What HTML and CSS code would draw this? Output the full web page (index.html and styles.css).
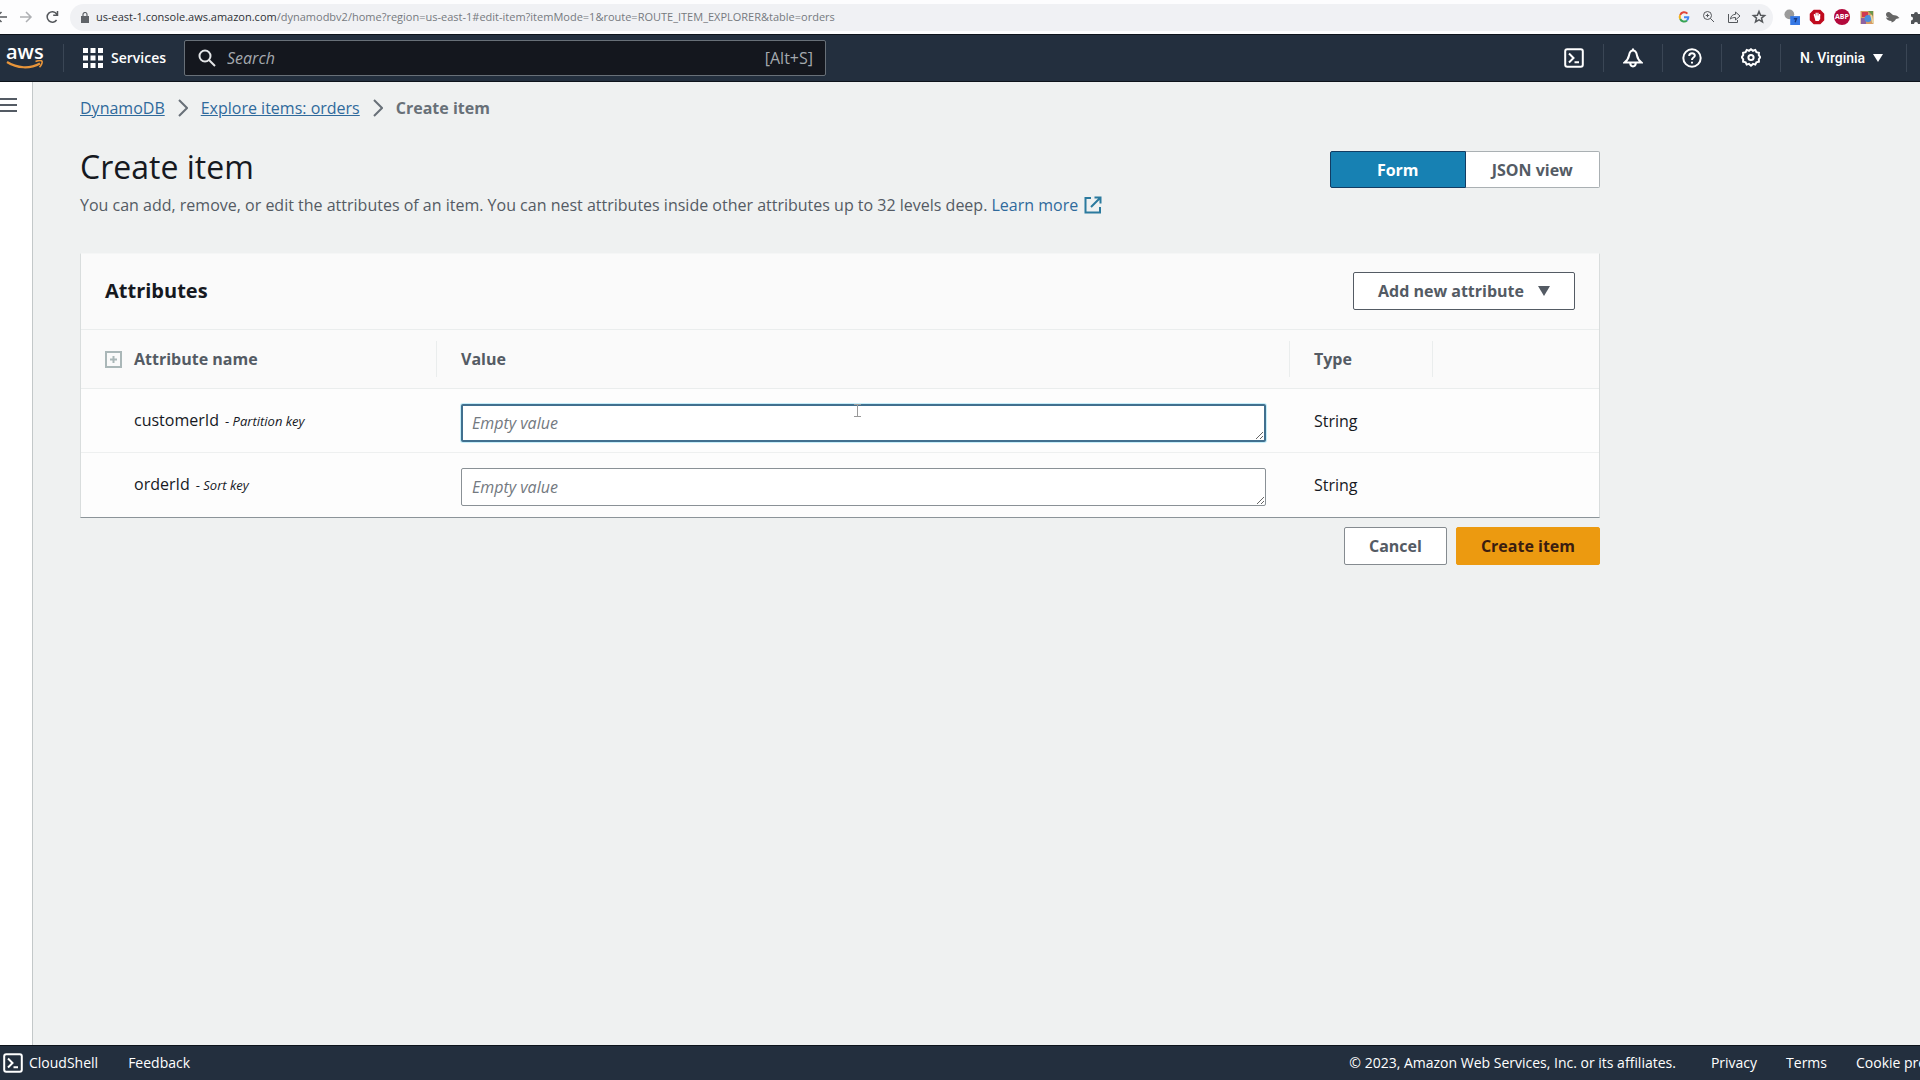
FILE: index.html
```html
<!DOCTYPE html>
<html lang="en">
<head>
<meta charset="utf-8">
<meta name="viewport" content="width=device-width, initial-scale=1">
<title>Create item</title>
<link rel="stylesheet" href="styles.css">
</head>
<body>
<div class="browser">
  <div class="browser-nav">
    <button class="tool back" aria-label="Back"><svg viewBox="0 0 16 16"><path d="M15 8H4M9.500 3l-5 5 5 5"/></svg></button>
    <button class="tool forward" aria-label="Forward"><svg viewBox="0 0 16 16"><path d="M2 8h11M8 3l5 5-5 5"/></svg></button>
    <button class="tool" aria-label="Reload"><svg viewBox="0 0 16 16"><path d="M12.600 11A5.200 5.200 0 1 1 12.500 4.800L13.500 6M13.500 2v4.300H9.200"/></svg></button>
  </div>
  <div class="address">
    <svg class="lock" viewBox="0 0 8 11"><path d="M0 4h8v7H0z" fill="#5f6368"/><path d="M2 4V2.500a2 2 0 0 1 4 0V4" fill="none" stroke="#5f6368" stroke-width="1.200"/></svg>
    <span class="url"><span class="host">us-east-1.console.aws.amazon.com</span>/dynamodbv2/home?region=us-east-1#edit-item?itemMode=1&amp;route=ROUTE_ITEM_EXPLORER&amp;table=orders</span>
    <div class="address-tools">
      <button class="tool" aria-label="Google"><svg viewBox="0 0 16 16" class="google"><path d="M11.400 4.600A4.300 4.300 0 0 0 4.200 6" stroke="#e0453a"/><path d="M4.200 6a4.300 4.300 0 0 0 0 4" stroke="#f2b21c"/><path d="M4.200 10a4.300 4.300 0 0 0 6.800 1.400" stroke="#37a455"/><path d="M11 11.400A4.300 4.300 0 0 0 12.300 8.200H8" stroke="#4285f4"/></svg></button>
      <button class="tool" aria-label="Zoom"><svg viewBox="0 0 16 16" class="thin"><circle cx="6.500" cy="6.500" r="4"/><path d="M9.500 9.500L13 13M4.800 6.500h3.400M6.500 4.800v3.400"/></svg></button>
      <button class="tool" aria-label="Share"><svg viewBox="0 0 16 16" class="thin"><path d="M2.500 5v8.500h9V11M4.500 10c.4-3.200 2.400-4.600 5-4.700V3l4.500 4-4.500 4V8.500c-2.200 0-3.800.4-5 1.500z"/></svg></button>
      <button class="tool" aria-label="Bookmark"><svg viewBox="0 0 16 16"><path d="M8 2.500l1.600 3.700 4 .3-3.100 2.600 1 3.900L8 10.900 4.500 13l1-3.900L2.400 6.500l4-.3z"/></svg></button>
    </div>
  </div>
  <div class="extensions">
    <button class="tool" aria-label="Extension, 7 items"><svg viewBox="0 0 18 18" class="solid"><circle cx="6" cy="6" r="5.500" fill="#9b9b9b"/><rect x="7" y="8" width="11" height="10" fill="#3578e5"/><path d="M11 11h3l-1.500 4" fill="none" stroke="#173a80"/></svg></button>
    <button class="tool" aria-label="Content blocker"><svg viewBox="0 0 16 16" class="solid"><path d="M5 1.500h6L14.500 5v6L11 14.500H5L1.500 11V5z" fill="#c00b1e" stroke="#c00b1e"/><path d="M5.500 7V5M7.200 7V3.800M8.900 7V3.800M10.600 7V5" stroke="#fff" stroke-width="1.300"/><path d="M4.900 6.500h6.300V10l-1.500 2H6.500z" fill="#fff"/></svg></button>
    <button class="tool abp">ABP</button>
    <button class="tool" aria-label="Colour tool"><svg viewBox="0 0 16 16" class="solid"><path d="M1.500 2h13v13h-13z" fill="#d99d63"/><path d="M3 3h6v5H3z" fill="#d13b52"/><path d="M9 2h5v5z" fill="#6a974b"/><path d="M2 9h5v6H2z" fill="#8d62a0"/><circle cx="9" cy="9.500" r="3.500" fill="#4b8ddd"/><path d="M12 6l2 8" stroke="#e1d9a4"/></svg></button>
    <button class="tool" aria-label="Bird"><svg viewBox="0 0 16 16" class="solid"><path d="M2 5.500C2 3.500 4 2.500 6 3.500L9 6l3 .5c2 .3 2 1.500 3.500 2.500L12 10c-1 2-2.500 3-4.500 3.500V12C4.500 12 2.500 10.500 2 8.500l3 .5C3 8 2 7 2 5.500z" fill="#666"/></svg></button>
    <button class="tool" aria-label="Extensions"><svg viewBox="0 0 16 16" class="solid"><path d="M2 5h3a2 2 0 1 1 4 0h4v4a2 2 0 1 1 0 4v2H9a2 2 0 0 0-4 0H2v-3.500a2 2 0 0 0 0-4z" fill="#505357"/></svg></button>
  </div>
</div>

<header class="topnav">
  <a class="logo" href="#" aria-label="AWS home">
    <span>aws</span>
    <svg viewBox="0 0 38 10"><path d="M1 2c10 6.500 23 7 33 1.500" fill="none" stroke="#e8953a" stroke-width="2.200"/><path d="M29.500 1.500c3-1 6-1 6.500-.2s-.5 4-2.500 6" fill="none" stroke="#e8953a" stroke-width="1.600"/></svg>
  </a>
  <button class="services">
    <svg viewBox="0 0 20 20"><path d="M0 0h5v5H0zM7.500 0h5v5h-5zM15 0h5v5h-5zM0 7.500h5v5H0zM7.500 7.500h5v5h-5zM15 7.500h5v5h-5zM0 15h5v5H0zM7.500 15h5v5h-5zM15 15h5v5h-5z"/></svg>
    Services
  </button>
  <label class="search">
    <svg viewBox="0 0 18 18"><circle cx="7" cy="7" r="5.500"/><path d="M11 11l6 6"/></svg>
    <input type="search" placeholder="Search" aria-label="Search">
    <span>[Alt+S]</span>
  </label>
  <nav class="utilities">
    <button class="utility" aria-label="CloudShell"><svg viewBox="0 0 20 20"><rect x="1.200" y="1.200" width="17.600" height="17.600" rx="2"/><path d="M5 5.500L9.500 10 5 14.500M10.500 14.200H15"/></svg></button>
    <button class="utility" aria-label="Notifications"><svg viewBox="0 0 20 20"><path d="M1.500 14.500C4 12.500 5.500 10.500 6 7.500 6.500 4.500 7.500 2.500 10 2.500s3.500 2 4 5c.5 3 2 5 4.500 7zM10 3V.5M7.200 15c.2 4.500 5.400 4.500 5.600 0"/></svg></button>
    <button class="utility" aria-label="Help"><svg viewBox="0 0 20 20"><circle cx="10" cy="10" r="8.700"/><path d="M7.200 8c.1-3.800 5.800-3.500 5.600-.3-.1 2-2.800 1.800-2.800 4.300M10 13.800v1.800"/></svg></button>
    <button class="utility" aria-label="Settings"><svg viewBox="0 0 20 20"><path d="M10 1.200l2 1.600 2.300-.9 1.100 2.300 2.500.5-.1 2.500 1.500 2-1.500 2 .1 2.500-2.500.6-1.100 2.300-2.300-.7-2 1.800-2-1.800-2.300.7-1.100-2.300-2.500-.6.100-2.500-1.500-2 1.500-2L2.100 4.700l2.500-.5 1.100-2.300 2.300.9z"/><circle cx="10" cy="9.500" r="2.600"/></svg></button>
    <button class="region">N. Virginia <svg viewBox="0 0 10 8"><path d="M0 0h10L5 8z" fill="#fff"/></svg></button>
  </nav>
</header>

<div class="body">
  <aside class="rail"><button class="menu" aria-label="Open navigation"><svg viewBox="0 0 18 16"><path d="M0 2h17M0 8h17M0 14h17"/></svg></button></aside>
  <main class="content">
    <nav class="crumbs" aria-label="Breadcrumb">
      <a href="#">DynamoDB</a>
      <svg viewBox="0 0 10 18"><path d="M1 1l8 8-8 8"/></svg>
      <a href="#">Explore items: orders</a>
      <svg viewBox="0 0 10 18"><path d="M1 1l8 8-8 8"/></svg>
      <strong>Create item</strong>
    </nav>
    <div class="title-row">
      <div>
        <h1>Create item</h1>
        <p class="intro">You can add, remove, or edit the attributes of an item. You can nest attributes inside other attributes up to 32 levels deep. <a href="#">Learn more <svg viewBox="0 0 18 18"><path d="M7 2H1.500v14.500H16V11M10.500 1.500H16.500v6M16 2L7 11"/></svg></a></p>
      </div>
      <div class="segments" role="group" aria-label="View">
        <button class="segment selected" aria-pressed="true">Form</button>
        <button class="segment" aria-pressed="false">JSON view</button>
      </div>
    </div>

    <section class="panel">
      <div class="panel-head">
        <h2>Attributes</h2>
        <button class="btn add">Add new attribute <svg viewBox="0 0 12 10"><path d="M0 0h12L6 10z" fill="#545b64"/></svg></button>
      </div>
      <table class="attributes">
        <colgroup><col class="col-name"><col><col class="col-type"><col class="col-actions"></colgroup>
        <thead>
          <tr>
            <th><div class="name-head"><button class="expand" aria-label="Expand all"><svg viewBox="0 0 17 17"><path d="M1 1h15v15H1zM5 8.500h7M8.500 5v7"/></svg></button>Attribute name</div></th>
            <th><div>Value</div></th>
            <th><div>Type</div></th>
            <th></th>
          </tr>
        </thead>
        <tbody>
          <tr>
            <td class="name"><label for="customer">customerId</label><span class="key">- <em>Partition key</em></span></td>
            <td class="value">
              <textarea id="customer" class="focused" rows="1" placeholder="Empty value"></textarea>
              <svg class="pointer" viewBox="0 0 7 13"><path d="M0 .5h7M3.500 1v11M0 12.500h7"/></svg>
            </td>
            <td>String</td>
            <td></td>
          </tr>
          <tr>
            <td class="name"><label for="order">orderId</label><span class="key">- <em>Sort key</em></span></td>
            <td class="value"><textarea id="order" rows="1" placeholder="Empty value"></textarea></td>
            <td>String</td>
            <td></td>
          </tr>
        </tbody>
      </table>
    </section>
    <div class="actions">
      <button class="btn">Cancel</button>
      <button class="btn primary">Create item</button>
    </div>
  </main>
</div>

<footer class="footer">
  <a class="shell" href="#"><svg viewBox="0 0 20 20"><rect x="1.200" y="1.200" width="17.600" height="17.600" rx="2"/><path d="M5 5.500L9.500 10 5 14.500M10.500 14.200H15"/></svg>CloudShell</a>
  <a href="#">Feedback</a>
  <span class="legal">© 2023, Amazon Web Services, Inc. or its affiliates.</span>
  <a class="privacy" href="#">Privacy</a>
  <a class="terms" href="#">Terms</a>
  <a class="cookies" href="#">Cookie preferences</a>
</footer>
</body>
</html>
```
FILE: styles.css
```css
* { box-sizing: border-box; }

body {
  margin: 0;
  min-height: 100vh;
  display: flex;
  flex-direction: column;
  background: #eff1f1;
  color: #16191f;
  font: 16px/24px "Open Sans", "Noto Sans", sans-serif;
  overflow-x: hidden;
}

button, input, textarea { font: inherit; color: inherit; }
button { border: 0; background: none; padding: 0; cursor: pointer; }
svg { display: block; flex: none; fill: none; }

/* Browser toolbar */
.browser {
  display: flex;
  align-items: center;
  height: 34px;
  background: #fdfdfe;
  overflow: hidden;
}
.browser-nav { display: flex; gap: 10px; width: 78px; margin-left: -8px; flex: none; }
.tool { width: 16px; height: 16px; flex: none; }
.tool svg { width: 16px; height: 16px; stroke: #55585c; stroke-width: 1.5; }
.tool svg.thin { stroke-width: 1; }
.tool svg.solid { stroke: none; }
.tool svg.google { stroke-width: 2; }
.forward svg { stroke: #aeb0b3; }
.address {
  display: flex;
  align-items: center;
  flex: 1;
  min-width: 0;
  height: 27px;
  padding: 0 6px 0 11px;
  border-radius: 14px;
  background: #f0f1f4;
}
.lock { width: 8px; height: 11px; margin-right: 7px; }
.url { font-size: 11px; line-height: 16px; color: #767a7f; white-space: nowrap; overflow: hidden; }
.host { color: #2f3236; }
.address-tools { display: flex; gap: 9px; margin-left: auto; }
.extensions { display: flex; gap: 9px; width: 147px; padding-left: 11px; flex: none; }
.abp {
  border-radius: 8px;
  background: #b3093c;
  color: #fff;
  font-size: 7px;
  font-weight: 700;
  line-height: 16px;
}

/* Service navigation */
.topnav {
  display: flex;
  align-items: center;
  height: 48px;
  background: #232f3e;
  border-top: 1px solid #0d131b;
  border-bottom: 1px solid #0d131b;
  color: #fff;
}
.logo {
  width: 64px;
  height: 28px;
  padding-left: 6px;
  border-right: 1px solid #3a4655;
  color: #fff;
  font-size: 20px;
  font-weight: 600;
  line-height: 16px;
  text-decoration: none;
  flex: none;
}
.logo span { display: block; }
.logo svg { width: 38px; height: 10px; }
.services {
  display: flex;
  align-items: center;
  gap: 8px;
  width: 120px;
  padding-left: 19px;
  font-size: 14px;
  font-weight: 600;
  flex: none;
}
.services svg { width: 20px; height: 20px; fill: #fff; }
.search {
  display: flex;
  align-items: center;
  width: 642px;
  height: 36px;
  padding: 0 12px 0 13px;
  border: 1px solid #687078;
  border-radius: 2px;
  background: #14171e;
  color: #a4a9ae;
}
.search svg { width: 18px; height: 18px; stroke: #e4e6e8; stroke-width: 2; }
.search input {
  flex: 1;
  min-width: 0;
  margin: 0 0 0 11px;
  padding: 0;
  border: 0;
  outline: 0;
  background: none;
}
.search input::placeholder { color: #a4a9ae; font-style: italic; opacity: 1; }
.utilities { display: flex; align-items: center; margin-left: auto; flex: none; }
.utility {
  display: flex;
  justify-content: center;
  width: 59px;
  border-right: 1px solid #3a4655;
  padding: 4px 0;
}
.utility svg { width: 20px; height: 20px; stroke: #fff; stroke-width: 2; }
.region {
  display: flex;
  align-items: center;
  gap: 8px;
  width: 126px;
  margin-right: 13px;
  padding: 2px 0 2px 19px;
  border-right: 1px solid #3a4655;
  font: 500 14px/24px Roboto, sans-serif;
}
.region svg { width: 10px; height: 8px; }

/* Page */
.body { display: flex; flex: 1; }
.rail { width: 33px; padding-top: 15px; background: #fff; border-right: 1px solid #c3c8c9; flex: none; }
.menu { display: block; }
.menu svg { width: 18px; height: 16px; stroke: #545b64; stroke-width: 2; }
.content { flex: 1; min-width: 0; max-width: 1567px; padding: 14px 0 40px 47px; }
a { color: #2f6a9c; }
.crumbs { display: flex; align-items: center; gap: 13px; }
.crumbs svg { width: 10px; height: 18px; stroke: #687078; stroke-width: 2; }
.crumbs strong { color: #687078; font-weight: 700; }
.title-row { display: flex; justify-content: space-between; align-items: flex-start; margin-top: 27px; }
h1 { margin: 0; font-size: 32px; line-height: 40px; font-weight: 400; }
.intro { margin: 6px 0 0; color: #545b64; }
.intro a { display: inline-flex; align-items: center; gap: 6px; text-decoration: none; }
.intro svg { width: 18px; height: 18px; stroke: #2b7a9e; stroke-width: 2; }
.segments { display: flex; margin-top: 4px; width: 270px; flex: none; }
.segment {
  flex: 1;
  height: 37px;
  border: 1px solid #aab0b3;
  border-left: 0;
  border-radius: 0 2px 2px 0;
  background: #fff;
  color: #545b64;
  font-weight: 700;
}
.segment.selected { border: 1px solid #123c63; border-radius: 2px 0 0 2px; background: #1781b3; color: #fff; }

.panel {
  margin-top: 36px;
  border: 1px solid #d9dddd;
  border-top-color: #f5f6f6;
  border-bottom-color: #8c9499;
  background: #fdfdfd;
}
.panel-head { display: flex; align-items: center; justify-content: space-between; height: 75px; padding: 0 24px 2px; background: #fafafa; }
h2 { margin: 0; font-size: 20px; line-height: 28px; font-weight: 700; }
.btn {
  height: 38px;
  padding: 0 24px;
  border: 1px solid #858b90;
  border-radius: 2px;
  background: #fff;
  color: #545b64;
  font-weight: 700;
}
.add { display: flex; align-items: center; gap: 14px; border-color: #545b64; }
.add svg { width: 12px; height: 10px; }
.attributes { width: 100%; border-collapse: collapse; table-layout: fixed; }
.col-name { width: 356px; }
.col-type { width: 143px; }
.col-actions { width: 166px; }
th { height: 59px; padding: 0; border: 1px solid #eaeded; border-width: 1px 0; background: #fafafa; color: #545b64; text-align: left; font-weight: 700; }
th > div { height: 36px; padding-left: 24px; border-right: 1px solid #eaeded; line-height: 36px; }
.name-head { display: flex; align-items: center; gap: 12px; }
.expand svg { width: 17px; height: 17px; stroke: #aab7b8; stroke-width: 2; }
td { height: 64px; padding: 0 24px; border-bottom: 1px solid #eef0f0; vertical-align: middle; }
tbody tr:last-child td { border-bottom: 0; }
.name { padding-left: 53px; white-space: nowrap; }
.key { margin-left: 6px; font-size: 13px; }
.value { position: relative; padding-top: 4px; }
textarea {
  display: block;
  width: 100%;
  height: 38px;
  padding: 6px 10px;
  border: 1px solid #8a9196;
  border-radius: 2px;
  outline: 0;
  background: #fff;
  resize: vertical;
}
textarea::placeholder { color: #737980; font-style: italic; opacity: 1; }
textarea.focused { border: 2px solid #41708f; padding: 5px 9px; box-shadow: 0 0 0 1px #c5eefa; }
.pointer { position: absolute; left: calc(50% - 10px); top: 15px; width: 7px; height: 13px; stroke: #999; }
.actions { display: flex; justify-content: flex-end; gap: 9px; margin-top: 9px; }
.primary { border-color: #ec9a10; background: #ec9a10; color: #3a1d10; }

/* Footer */
.footer {
  display: flex;
  align-items: center;
  height: 35px;
  padding-left: 3px;
  background: #232f3e;
  border-top: 1px solid #0d131b;
  color: #fff;
  font-size: 14px;
  font-weight: 500;
  white-space: nowrap;
}
.footer a { color: #fff; text-decoration: none; }
.shell { display: flex; align-items: center; gap: 6px; margin-right: 30px; }
.shell svg { width: 20px; height: 20px; stroke: #fff; stroke-width: 2; }
.legal { margin-left: auto; margin-right: 35px; }
.privacy, .terms { margin-right: 29px; }
.cookies { width: 64px; overflow: hidden; }
```
